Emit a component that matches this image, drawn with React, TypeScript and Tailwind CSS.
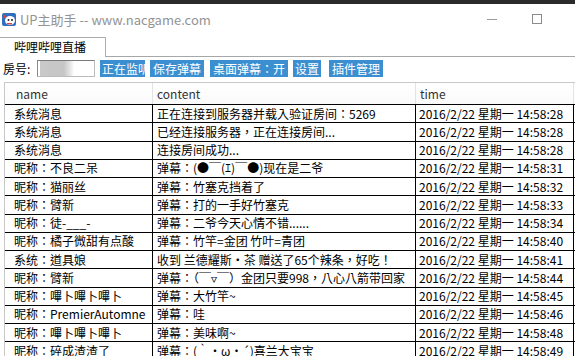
import React from 'react';

const T = '2016/2/22 星期一 14:58:';

const rows: [string, string, string][] = [
  ['系统消息', '正在连接到服务器并载入验证房间：5269', T + '28'],
  ['系统消息', '已经连接服务器，正在连接房间...', T + '28'],
  ['系统消息', '连接房间成功...', T + '28'],
  ['昵称：不良二呆', '弹幕：(●￣(ｴ)￣●)现在是二爷', T + '31'],
  ['昵称：猫丽丝', '弹幕：竹塞克挡着了', T + '32'],
  ['昵称：臂新', '弹幕：打的一手好竹塞克', T + '33'],
  ['昵称：徒-___-', '弹幕：二爷今天心情不错......', T + '34'],
  ['昵称：橘子微甜有点酸', '弹幕：竹竿=金团  竹叶=青团', T + '40'],
  ['系统：道具娘', '收到 兰德耀斯·茶 赠送了65个辣条，好吃！', T + '41'],
  ['昵称：臂新', '弹幕：（￣▿￣）金团只要998，八心八箭带回家', T + '44'],
  ['昵称：嗶卜嗶卜嗶卜', '弹幕：大竹竿~', T + '45'],
  ['昵称：PremierAutomne', '弹幕：哇', T + '46'],
  ['昵称：嗶卜嗶卜嗶卜', '弹幕：美味啊~', T + '48'],
  ['昵称：碎成渣渣了', '弹幕：(｀・ω・´)喜兰大宝宝', T + '49'],
];

const AppIcon = () => (
  <svg width="15" height="15" viewBox="0 0 15 15">
    <rect x="0" y="1" width="14" height="13" rx="2" fill="#2f6fc0" />
    <ellipse cx="8" cy="8.5" rx="5" ry="4.5" fill="#fff" />
    <circle cx="6.5" cy="8" r="1" fill="#222" />
    <circle cx="10" cy="8" r="1" fill="#222" />
    <path d="M1 2 L5 5 L2 6 Z" fill="#e04040" />
    <rect x="5" y="11" width="5" height="1.5" fill="#e04040" />
  </svg>
);

const btn = 'h-[17px] bg-[#3b8fd1] text-white flex items-center whitespace-nowrap';

export default function App() {
  return (
    <div className="w-[575px] h-[356px] overflow-hidden bg-white font-['Noto_Sans_CJK_TC','Noto_Sans_CJK_SC',sans-serif] text-[12px] leading-none text-black">
      <div className="h-[4px] bg-[#2b2b2b]" />

      {/* title bar */}
      <div className="h-[30px] flex items-center">
        <div className="ml-[2px] mt-[1px]">
          <AppIcon />
        </div>
        <span className="ml-[3px] text-[13px] text-[#939393]">UP主助手 -- www.nacgame.com</span>
        <div className="ml-auto flex items-center">
          <div className="w-[10px] h-px bg-[#9a9a9a] mr-[35px]" />
          <div className="w-[10px] h-[10px] border border-[#8a8a8a] mr-[33px]" />
        </div>
      </div>

      {/* tabs */}
      <div className="h-[23px] flex items-end">
        <div className="w-[106px] h-[20px] border-t border-r border-[#adadad] flex items-center pl-[14px] pb-[1px]">
          哔哩哔哩直播
        </div>
        <div className="flex-1 border-b border-[#a7a7a7]" />
      </div>

      {/* toolbar */}
      <div className="h-[25px] flex items-start pt-[3px]">
        <span className="ml-[3px] w-[34px] h-[17px] flex items-center">房号:</span>
        <div className="w-[58px] h-[17px] border border-[#bcbcbc] border-t-[#7a7a7a] border-l-[#8a8a8a] flex">
          <div className="ml-[2px] w-[34px] h-full bg-[linear-gradient(90deg,#c9c9c9,#c6c6c6_70%,#e8e8e8_90%,#fff)]" />
        </div>
        <div className={`${btn} ml-[5px] w-[45px] pl-[2px] overflow-hidden`}>正在监听</div>
        <div className={`${btn} ml-[5px] px-[3px]`}>保存弹幕</div>
        <div className={`${btn} ml-[6px] px-[3px]`}>桌面弹幕：开</div>
        <div className={`${btn} ml-[5px] px-[2px]`}>设置</div>
        <div className={`${btn} ml-[8px] px-[3px]`}>插件管理</div>
      </div>

      {/* table */}
      <div className="ml-[4px] w-[571px] border-l border-t border-[#c8c8c8] bg-[#f0f0f0]">
        <div className="h-[22px] flex bg-[linear-gradient(#ffffff,#fafafa)] border-b border-black text-[#333]">
          <div className="w-[148px] border-r border-[#e3e3e3] flex items-center pl-[11px]">name</div>
          <div className="w-[263px] border-r border-[#e3e3e3] flex items-center pl-[4px]">content</div>
          <div className="w-[158px] border-r border-[#e3e3e3] flex items-center pl-[4px]">time</div>
        </div>
        {rows.map((r, i) => (
          <div key={i} className="h-[18.25px] flex border-b border-black bg-white">
            <div className="w-[148px] border-r border-black flex items-center pl-[9px] whitespace-nowrap overflow-hidden">{r[0]}</div>
            <div className="w-[263px] border-r border-black flex items-center pl-[4px] whitespace-nowrap overflow-hidden">{r[1]}</div>
            <div className="w-[158px] border-r border-black flex items-center pl-[3px] whitespace-nowrap overflow-hidden">{r[2]}</div>
          </div>
        ))}
      </div>
    </div>
  );
}
